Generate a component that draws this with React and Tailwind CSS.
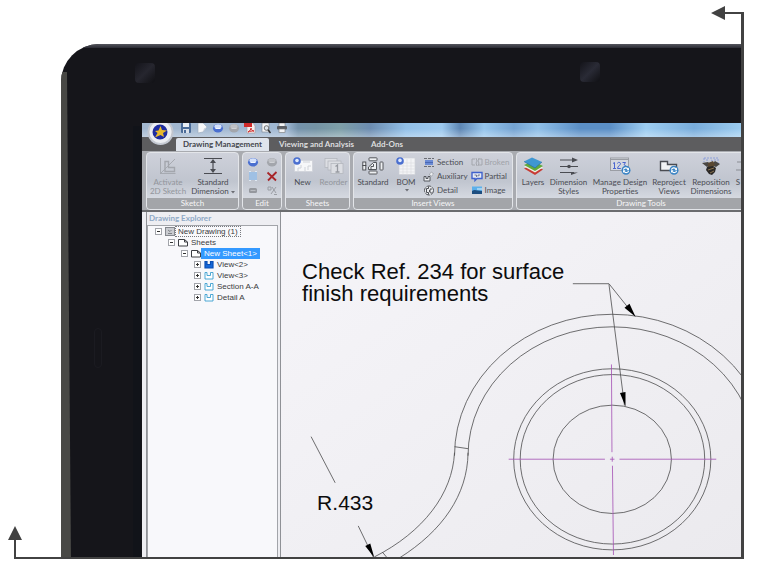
import { useState } from 'react'
import clsx from 'clsx'

/* ---------- quick access icons ---------- */

const SaveIcon = () => (
  <svg width="12" height="11" viewBox="0 0 12 11"><rect x="1" y="0" width="10" height="10" rx="1" fill="#4a6b98"/><rect x="3" y="0" width="6" height="4" fill="#e9eef5"/><rect x="3" y="6" width="6" height="4" fill="#d8dfe9"/><rect x="4" y="7" width="2" height="3" fill="#4a6b98"/></svg>
)
const PageIcon = () => (
  <svg width="12" height="11" viewBox="0 0 12 11"><path d="M2 0h5l4 4-4 5-5 1z" fill="#f7f8fa" stroke="#9ba8ba" strokeWidth=".6"/><path d="M11 4L8 5.500 7 9z" fill="#c6ced9"/></svg>
)
const Orb = ({ gray }) => (
  <svg width="12" height="11" viewBox="0 0 12 11">
    <ellipse cx="6" cy="5.300" rx="5" ry="4.300" fill={gray ? '#a3a6ac' : '#4a6fd0'}/>
    <ellipse cx="6" cy="3.600" rx="3.600" ry="2.400" fill={gray ? '#bfc1c6' : '#d3e0fa'}/>
    <path d={gray ? 'M3.500 5.500h5' : 'M8.500 5.500h-5'} fill="none" stroke={gray ? '#cfd1d5' : '#f4f7fe'} strokeWidth="1.200"/>
  </svg>
)
const PdfIcon = () => (
  <svg width="12" height="11" viewBox="0 0 12 11"><path d="M3 0h6l2 3v7H3z" fill="#f5eded" stroke="#a99" strokeWidth=".6"/><rect x="0" y="0" width="8" height="4" fill="#cf2a2a"/><path d="M4 9c2-1 3-3 3-4 0 2 2 3 3 3-2 0-4 0-6 1z" fill="none" stroke="#cf2a2a"/></svg>
)
const PreviewIcon = () => (
  <svg width="12" height="11" viewBox="0 0 12 11"><rect x="2" y="0" width="7" height="9" fill="#f4f5f7" stroke="#7c828c" strokeWidth=".6"/><circle cx="6.500" cy="5" r="2.300" fill="#dfe6ee" stroke="#555" strokeWidth=".8"/><path d="M8 6.800L10.500 10" stroke="#333" strokeWidth="1.500"/></svg>
)
const PrintIcon = () => (
  <svg width="12" height="11" viewBox="0 0 12 11"><rect x="3" y="0" width="6" height="4" fill="#f2f3f5" stroke="#777" strokeWidth=".6"/><rect x="1" y="3" width="10" height="3.500" rx="1" fill="#5a5d63"/><rect x="3" y="6" width="6" height="3.500" fill="#f2f3f5" stroke="#777" strokeWidth=".6"/></svg>
)

/* ---------- ribbon icons ---------- */

const SketchIcon = () => (
  <svg width="20" height="18" viewBox="0 0 20 18" fill="none" stroke="#a3a6ad"><path d="M2.500 1v15.500h15M2 17L17 2" strokeWidth=".9"/><path d="M7 4.500h3.500v6h6v4H7z" strokeWidth="1.400"/></svg>
)
const DimensionIcon = () => (
  <svg width="20" height="18" viewBox="0 0 20 18" stroke="#4a4c52" fill="#4a4c52"><path d="M1 1.500h18M1 16.500h18M10 3v12" strokeWidth="1.200"/><path d="M10 2l3 4H7zM10 16l3-4H7z" stroke="none"/></svg>
)
const NewIcon = () => (
  <svg width="20" height="18" viewBox="0 0 20 18"><rect x="1.500" y="3.500" width="18" height="11" fill="#f6f7f9" stroke="#cdd0d7" strokeWidth=".7"/><path d="M5 14v-3h3v-3M12 14v-4M15 13v-4h3M10 5h7" stroke="#cfd2d8" fill="none"/><circle cx="4" cy="4" r="3.800" fill="#4a6fd0"/><circle cx="4" cy="3.500" r="1.800" fill="#dfe9fc"/></svg>
)
const ReorderIcon = () => (
  <svg width="20" height="18" viewBox="0 0 20 18" fill="#dcdee3" stroke="#b4b7be" strokeWidth=".8"><rect x="1" y="1.500" width="12" height="9"/><rect x="4" y="4" width="13" height="9"/><rect x="7" y="6.500" width="12" height="10"/><path d="M11.500 9.500l2-1.500v7M11.500 15h4" fill="none" stroke="#979aa1" strokeWidth="1.300"/></svg>
)
const StandardIcon = () => (
  <svg width="22" height="18" viewBox="0 0 22 18" fill="#eef0f3" stroke="#45474d" strokeWidth=".9"><rect x="7" y=".8" width="8" height="3" rx=".6"/><rect x="7" y="14" width="8" height="3" rx=".6"/><rect x=".8" y="5" width="3" height="3.500"/><rect x=".8" y="8.500" width="3" height="4.500"/><rect x="18" y="5" width="3" height="8" rx=".6"/><path d="M6.500 12.500v-2.500l5-4.500h3v7zM9 12.500V9.500h2.500V7"/></svg>
)
const BomIcon = () => (
  <svg width="20" height="18" viewBox="0 0 20 18"><rect x="3" y="1" width="16" height="16.500" fill="#f3f4f6" stroke="#cdd0d6" strokeWidth=".7"/><path d="M3 6h16M3 9h16M3 12h16M3 15h16M7 2v15.500M11 2v15.500M15 2v15.500" stroke="#dcdee3" strokeWidth=".7"/><circle cx="4" cy="4" r="3.800" fill="#4a6fd0"/><circle cx="4" cy="3.400" r="1.800" fill="#dfe9fc"/></svg>
)
const LayersIcon = () => (
  <svg width="20" height="18" viewBox="0 0 20 18"><path d="M1 11.500l9-4 10 5-8 5.500z" fill="#c83c34"/><path d="M1 9.500l9-4 10 5-8 5z" fill="#f0efe8"/><path d="M1 8l9-4 10 5-8 5z" fill="#62ab3c"/><path d="M1 4.500L9 .5l10 4.500-7 6z" fill="#3f97d2"/><path d="M1 4.500L12 11l7-6" fill="none" stroke="#2a6f9f" strokeWidth=".7"/></svg>
)
const StylesIcon = () => (
  <svg width="20" height="18" viewBox="0 0 20 18" stroke="#4a4c52" fill="#4a4c52"><path d="M1 3h14M1 9.500h18M1 15.500h14" strokeWidth="1.100"/><path d="M13 .5l6 2.500-6 2.500zM12 15.500h7l-7 2.500z" stroke="none"/><circle cx="10" cy="9.500" r="1.800" stroke="none"/></svg>
)
// small blue refresh ball shared by the two "update" commands
const Refresh = ({ x, y }) => (
  <g transform={`translate(${x} ${y})`}><circle r="4.500" fill="#3b84c4"/><path d="M-2.600-.6c.6-2 3.200-2.400 4.600-.6M2.600.6c-.6 2-3.200 2.400-4.600.6" fill="none" stroke="#fff" strokeWidth="1.200"/><path d="M3-2.800V0H.4zM-3 2.800V0h2.600z" fill="#fff"/></g>
)
const ManageIcon = () => (
  <svg width="22" height="18" viewBox="0 0 22 18"><rect x="1.500" y="1" width="18" height="12.500" fill="#d5d8df" stroke="#9a9da4"/><path d="M1 2.500h19" stroke="#9a9da4"/><path d="M4 6.500l1.500-1v6M4 11.500h3M8.500 6.500c0-1.600 3-1.500 3 .2 0 1.500-3 2.500-3 4.800h3.300M13.500 5.500h3l-1.500 2.300c2.500 0 2 3.700-1.500 3.500" fill="none" stroke="#4a66cf"/><Refresh x="17" y="13.200"/></svg>
)
const ReprojectIcon = () => (
  <svg width="20" height="18" viewBox="0 0 20 18"><path d="M1.500 4.500h7v3h9v6h-16z" fill="#f1f2f4" stroke="#4a4c52" strokeWidth="1.400"/><Refresh x="15" y="13.200"/></svg>
)
const RepositionIcon = () => (
  <svg width="20" height="18" viewBox="0 0 20 18"><path d="M3 1h14v6M3 1v4M5 3h3M10 3l2 1M13 3h3" fill="none" stroke="#7f94dc" strokeWidth=".8" strokeDasharray="2 1"/><path d="M1 6l6-1 3 3-4 2zM19 7l-5-3-4 4 5 2z" fill="#4a4744"/><path d="M7 6l5-2 2 4-3 3-4-1z" fill="#5a4832"/><path d="M6 10l6-1 3 2-1 4-3 3-3-1-3-4z" fill="#2b2826"/><path d="M7 13l6-2M9 16l4-2" stroke="#a3875a" strokeWidth=".8"/></svg>
)
const MoreIcon = () => (
  <svg width="6" height="18" viewBox="0 0 6 18" stroke="#8a8d93" fill="none"><path d="M2 5h4M1 13h5"/></svg>
)

const SelectIcon = () => (
  <svg width="12" height="11" viewBox="0 0 12 11"><rect x="2" y="1" width="8" height="8" fill="#9fc0e4"/><path d="M2 .5h2M8 .5h2M2 9.500h2M8 9.500h2" stroke="#dfe9f4"/></svg>
)
const DeleteIcon = () => (
  <svg width="12" height="11" viewBox="0 0 12 11"><path d="M1.500 1.500L10 9.500M10.500 1L2 9.500" stroke="#a8262a" strokeWidth="1.800"/></svg>
)
const LinkIcon = () => (
  <svg width="12" height="11" viewBox="0 0 12 11"><rect x="2" y="3" width="8" height="5" rx="1.500" fill="#95989e"/><path d="M3.500 5.500h5" stroke="#b9bcc2"/></svg>
)
const TrimIcon = () => (
  <svg width="12" height="11" viewBox="0 0 12 11" fill="none" stroke="#9b9ea4"><path d="M2 2h3v3H2zM6 2l4 6M10 2L5 9M8 9.500h3"/></svg>
)
const SectionIcon = () => (
  <svg width="12" height="11" viewBox="0 0 12 11"><path d="M1 1.500h10M1 9.500h10" stroke="#6a6d74" strokeDasharray="3 1"/><rect x="2" y="3" width="8" height="5" fill="#6b8bd4"/><path d="M2 5.500h8" stroke="#4a68b4"/></svg>
)
const AuxIcon = () => (
  <svg width="12" height="11" viewBox="0 0 12 11" fill="#eceef1" stroke="#55585e"><path d="M1 5.500h2v2h2v-2h2v4.500H1z"/><path d="M8.500 1l2 2-2.200 2.200-2-2z" strokeWidth=".7" stroke="#8d9096"/></svg>
)
const DetailIcon = () => (
  <svg width="12" height="11" viewBox="0 0 12 11" fill="#eceef1" stroke="#4c4f55"><circle cx="6" cy="5.500" r="4.500" strokeDasharray="5 1"/><path d="M5.500 1.500v2H3.500v4h2v2M8 3v2h-1.500v2H8v1.500" fill="none"/></svg>
)
const BrokenIcon = () => (
  <svg width="12" height="11" viewBox="0 0 12 11" fill="none" stroke="#a3a6ac"><path d="M4 2H1v6h3M8 2h3v6H8M5 1l1 3-1 2 1 3M8 1L7 4l1 2-1 3"/></svg>
)
const PartialIcon = () => (
  <svg width="12" height="11" viewBox="0 0 12 11"><path d="M1 1.500h10v6H6l-2 2v-2H1z" fill="#e6ebf5" stroke="#3f62cc" strokeWidth="1.400"/><path d="M3.500 4h2v2M7 5.500V4h2" stroke="#55617a" fill="none" strokeWidth=".8"/></svg>
)
const ImageIcon = () => (
  <svg width="12" height="11" viewBox="0 0 12 11"><rect x="1" y="1.500" width="10" height="7.500" fill="#5cb0ea"/><path d="M1 6c3-2 5 0 10 0v3H1z" fill="#1d4e80"/><path d="M6 4h5" stroke="#e3f3fc"/></svg>
)

/* ---------- explorer icons ---------- */

const DrawingDocIcon = () => (
  <svg width="10" height="9" viewBox="0 0 10 9"><rect x=".5" y=".5" width="9" height="8" fill="#c9cbd0" stroke="#85888e"/><path d="M3 3l2 1.500 1.500-1.500M3 6.500h4" stroke="#6d7076" strokeWidth=".8" fill="none"/></svg>
)
const SheetIcon = () => (
  <svg width="10" height="9" viewBox="0 0 10 9"><path d="M.5 1.500h6l3 2.500v4h-9z" fill="#fff" stroke="#3c3e43"/><path d="M6.500 1.500V4h3" fill="none" stroke="#3c3e43"/></svg>
)
const ViewIcon = ({ filled }) => (
  <svg width="10" height="9" viewBox="0 0 10 9"><path d="M1 1.500h2v3h3.500v-3H9v6.500H1z" fill={filled ? '#1668d8' : '#fff'} stroke={filled ? '#0b4fb4' : '#3b9fd0'} strokeWidth={filled ? 1.2 : 0.9}/></svg>
)

const quickAccess = [
  ['Save', <SaveIcon/>], ['New', <PageIcon/>], ['Undo', <Orb/>], ['Redo', <Orb gray/>],
  ['Publish to PDF', <PdfIcon/>], ['Print Preview', <PreviewIcon/>], ['Print', <PrintIcon/>],
]

const editTools = [
  ['Undo', <Orb/>], ['Redo', <Orb gray/>], ['Select', <SelectIcon/>],
  ['Delete', <DeleteIcon/>], ['Link', <LinkIcon/>], ['Trim', <TrimIcon/>],
]

const tabs = ['Drawing Management', 'Viewing and Analysis', 'Add-Ons']

const tree = [
  { id: 'root', label: 'New Drawing (1)', level: 0, open: true, icon: <DrawingDocIcon/> },
  { id: 'sheets', label: 'Sheets', level: 1, open: true, icon: <SheetIcon/> },
  { id: 'sheet1', label: 'New Sheet<1>', level: 2, open: true, icon: <SheetIcon/> },
  { id: 'view2', label: 'View<2>', level: 3, icon: <ViewIcon filled/> },
  { id: 'view3', label: 'View<3>', level: 3, icon: <ViewIcon/> },
  { id: 'secA', label: 'Section A-A', level: 3, icon: <ViewIcon/> },
  { id: 'detA', label: 'Detail A', level: 3, icon: <ViewIcon/> },
]
const indent = ['pl-[7px]', 'pl-[20px]', 'pl-[33px]', 'pl-[46px]']

function Group({ title, className, children }) {
  return (
    <section className={clsx('flex shrink-0 flex-col overflow-hidden rounded-sm border border-[#e3e5e9] bg-linear-to-b from-[#ced1da] via-[#c0c5cf] to-[#e3e6ec]', className)}>
      <div className="flex flex-1 items-start pt-1">{children}</div>
      <h2 className="h-[11px] bg-[#a3a5a9] text-center leading-[10px] text-[#f6f6f7]">{title}</h2>
    </section>
  )
}

function Tool({ icon, lines, disabled, menu, className }) {
  return (
    <button disabled={disabled} className={clsx('flex shrink-0 flex-col items-center whitespace-nowrap leading-[9px]', disabled ? 'text-[#92959b]' : 'text-[#4b4d54]', className)}>
      {icon}
      <span className="mt-[3px]">{lines[0]}</span>
      {lines[1] && <span>{lines[1]}{menu && <Caret/>}</span>}
      {!lines[1] && menu && <Caret/>}
    </button>
  )
}

const Caret = () => <svg className="ml-[2px] inline-block" width="4" height="6" viewBox="0 0 4 6"><path d="M0 2h4L2 4.500z" fill="#6b6d73"/></svg>

function SmallTool({ icon, label, disabled }) {
  return (
    <button disabled={disabled} className={clsx('flex items-center gap-[2px] leading-[11px]', disabled ? 'text-[#a0a3a9]' : 'text-[#4b4d54]')}>
      {icon}<span>{label}</span>
    </button>
  )
}

function Ribbon() {
  return (
    <div className="flex h-[61px] gap-[3px] overflow-hidden border-b-2 border-[#6b6c6f] bg-[#a9abb0] pt-px pl-1">
      <Group title="Sketch" className="w-[93px]">
        <Tool icon={<SketchIcon/>} lines={['Activate', '2D Sketch']} disabled className="w-[42px]"/>
        <Tool icon={<DimensionIcon/>} lines={['Standard', 'Dimension']} menu className="w-[48px]"/>
      </Group>
      <Group title="Edit" className="w-[40px]">
        <div className="grid grid-cols-2 justify-items-center gap-y-[3px]">
          {editTools.map(([name, icon]) => <button key={name} aria-label={name} className="w-[19px] pl-1">{icon}</button>)}
        </div>
      </Group>
      <Group title="Sheets" className="w-[65px]">
        <Tool icon={<NewIcon/>} lines={['New']} className="w-[33px]"/>
        <Tool icon={<ReorderIcon/>} lines={['Reorder']} disabled className="w-[29px]"/>
      </Group>
      <Group title="Insert Views" className="w-[160px]">
        <Tool icon={<StandardIcon/>} lines={['Standard']} className="w-[38px]"/>
        <Tool icon={<BomIcon/>} lines={['BOM']} menu className="w-[28px]"/>
        <div className="flex flex-col gap-[3px] pl-[3px]">
          <SmallTool icon={<SectionIcon/>} label="Section"/>
          <SmallTool icon={<AuxIcon/>} label="Auxiliary"/>
          <SmallTool icon={<DetailIcon/>} label="Detail"/>
        </div>
        <div className="flex flex-col gap-[3px] pl-[3px]">
          <SmallTool icon={<BrokenIcon/>} label="Broken" disabled/>
          <SmallTool icon={<PartialIcon/>} label="Partial"/>
          <SmallTool icon={<ImageIcon/>} label="Image"/>
        </div>
      </Group>
      <Group title="Drawing Tools" className="w-[250px]">
        <div className="flex gap-1 pl-1">
          <Tool icon={<LayersIcon/>} lines={['Layers']} className="w-[24px]"/>
          <Tool icon={<StylesIcon/>} lines={['Dimension', 'Styles']} className="w-[39px]"/>
          <Tool icon={<ManageIcon/>} lines={['Manage Design', 'Properties']} className="w-[56px]"/>
          <Tool icon={<ReprojectIcon/>} lines={['Reproject', 'Views']} className="w-[34px]"/>
          <Tool icon={<RepositionIcon/>} lines={['Reposition', 'Dimensions']} className="w-[42px]"/>
          <Tool icon={<MoreIcon/>} lines={['S']} className="w-[4px]"/>
        </div>
      </Group>
    </div>
  )
}

function Explorer() {
  const [selected, setSelected] = useState('sheet1')
  return (
    <aside className="flex w-[135px] shrink-0 flex-col border-x border-[#8f9196] bg-[#eeeef2]">
      <h2 className="h-[13px] pl-[2px] text-[8px] leading-[13px] font-bold text-[#8fa9c6]">Drawing Explorer</h2>
      <ul className="mr-[2px] flex-1 border border-[#a2a4a9] bg-[#f8f8fb] font-['Liberation_Sans',sans-serif] text-[8px] text-[#3a3b40]">
        {tree.map(n => (
          <li key={n.id} className={clsx('flex h-[11px] items-center gap-[3px]', indent[n.level])}>
            <button aria-label={n.open ? 'Collapse' : 'Expand'} className="shrink-0">
              <svg width="7" height="7" viewBox="0 0 7 7"><rect x=".5" y=".5" width="6" height="6" fill="#fff" stroke="#a2a4aa"/><path d={n.open ? 'M2 3.500h3' : 'M2 3.500h3M3.500 2v3'} stroke="#333"/></svg>
            </button>
            <button onClick={() => setSelected(n.id)} className="flex items-center">
              {n.icon}
              <span className={clsx('border px-[2px] leading-[9px] whitespace-nowrap', selected === n.id ? 'border-[#3399ff] bg-[#3399ff] text-white' : n.level === 0 ? 'border-dotted border-[#77797e]' : 'border-transparent')}>{n.label}</span>
            </button>
          </li>
        ))}
      </ul>
    </aside>
  )
}

function Canvas() {
  return (
    <div className="min-w-0 flex-1 overflow-hidden bg-linear-to-br from-[#f6f5f9] to-[#ebeaee]">
      <svg className="h-full w-full" viewBox="282 212 460 345" preserveAspectRatio="xMinYMin slice" fill="none" stroke="#4c4c4e" strokeWidth=".8">
        {/* bracket profile */}
        <path d="M455 455A157 141 0 0 1 769 455M468.500 455A143.500 128.500 0 0 1 755.500 455"/>
        <path d="M455 452C453 493 424 531 375 556M468.500 452C468 494 443 530 400 557M455 446l13.500 2M383 551l5 6"/>
        {/* bore */}
        <ellipse cx="612.300" cy="458.600" rx="98.300" ry="90.300"/>
        <ellipse cx="612.500" cy="458.600" rx="92" ry="84.500"/>
        <ellipse cx="612.300" cy="458.600" rx="59" ry="54"/>
        <path d="M509 458.500h96M610 458.500h4.500M619.500 458.500h96.500M611.500 364l.5 87.500M612.300 456v5M612.500 465l1 89" stroke="#a44fb4"/>
        {/* leaders */}
        <path d="M573 283.500h36L635 316M609 284l15.500 121M312 436l24 46M359 525l15 31"/>
        <path d="M635.500 316.500l-11-9 5-4zM625.500 406l-5.500-13.500 5.500-1zM375 556.500l-9-11.500 5-2.500z" fill="#000" stroke="none"/>
        <g className="font-['Liberation_Sans',sans-serif] text-[21px]" fill="#0c0c0d" stroke="none">
          <text className="text-[22px]" x="303" y="279">Check Ref. 234 for surface</text>
          <text className="text-[22px]" x="303" y="301">finish requirements</text>
          <text x="318" y="509">R.433</text>
        </g>
      </svg>
    </div>
  )
}

function AppWindow() {
  const [tab, setTab] = useState(tabs[0])
  return (
    <div className="relative flex flex-1 flex-col overflow-hidden bg-[#eeeef2] font-[Lato,sans-serif] text-[8px]">
      <div className="flex h-[14px] gap-1 bg-[linear-gradient(0deg,#ffffff55,#ffffff00_60%),linear-gradient(90deg,#a3b8d0_0%,#9fb7d2_24%,#7492ab_26%,#7493a4_29%,#7e9fa8_33%,#6c8cb0_38%,#92c0e8_44%,#9dc9ee_50%,#5d86b4_53%,#95c5ec_57%,#74a3d2_62%,#8fbfe8_66%,#5b8fc6_73%,#5b8fc6_78%,#9dcdf1_84%,#78acdb_92%,#9dcdf1_100%)] pl-[38px]">
        {quickAccess.map(([name, icon]) => <button key={name} aria-label={name} className="h-[11px] w-3">{icon}</button>)}
      </div>
      <nav className="flex h-[14px] gap-[3px] bg-[#5d5d5f] pt-px pl-[34px]">
        {tabs.map(t => (
          <button key={t} onClick={() => setTab(t)} className={clsx('rounded-t-xs px-[7px] leading-[13px] font-bold', tab === t ? 'bg-[#dfe4ec] text-[#44464d]' : 'text-[#dcdcde]')}>{t}</button>
        ))}
      </nav>
      <button aria-label="Application menu" className="absolute -top-1 left-[5px]">
        <svg width="27" height="27" viewBox="0 0 27 27">
          <circle cx="13.500" cy="13" r="13" fill="#c3c8d2"/>
          <circle cx="13.500" cy="13" r="11.500" fill="#eceef2" stroke="#b4b9c3" strokeWidth=".6"/>
          <circle cx="13" cy="13" r="7.500" fill="#1f2da0"/>
          <path d="M13.500 7l1.500 4 5 .5-4 2.500 1 4-3.500-2L8 18.500l2.500-4.500-2.500-2 3.500-.5z" fill="#e8b92c"/>
        </svg>
      </button>
      <Ribbon/>
      <main className="flex min-h-0 flex-1 pl-1">
        <Explorer/>
        <Canvas/>
      </main>
    </div>
  )
}

export default function App() {
  return (
    <div className="relative flex h-screen flex-col bg-white pt-11 pr-[18px] pb-3 pl-[61px]">
      {/* laptop lid */}
      <div className="relative flex min-h-0 flex-1 flex-col overflow-hidden rounded-tl-[38px] bg-[#15151a] pt-[79px] pl-[81px]">
        <span className="absolute inset-x-0 top-0 h-1 bg-linear-to-b from-[#55565e] to-[#2a2b33]"/>
        <span className="absolute top-7 bottom-0 left-0 w-[10px] bg-[#484845] [clip-path:polygon(0_0,60%_0,100%_100%,0_100%)]"/>
        <span className="absolute top-[82px] bottom-0 left-[72px] w-2 bg-[#111319]"/>
        <span className="absolute top-[19px] left-[74px] size-5 rounded-sm bg-linear-to-br from-[#14141a] via-[#26262f] to-[#101014]"/>
        <span className="absolute top-[18px] right-[142px] size-5 rounded-sm bg-linear-to-br from-[#14141a] via-[#2a2b36] to-[#101014]"/>
        <span className="absolute top-[284px] left-[33px] h-10 w-2 rounded-full border border-[#1b1b21]"/>
        <AppWindow/>
      </div>

      {/* section cut line */}
      <div className="pointer-events-none absolute top-3 right-4 bottom-[11px] left-[14px] border-r-[3px] border-b-2 border-[#424242]">
        <svg className="absolute -bottom-[2px] -left-[6px]" width="14" height="33" viewBox="0 0 14 33" fill="#424242"><path d="M7 0l7 14H0zM6 13h2v20H6z"/></svg>
        <svg className="absolute -top-[6px] -right-[3px]" width="33" height="14" viewBox="0 0 33 14" fill="#424242"><path d="M0 7l14-7v14zM13 6h20v2H13z"/></svg>
      </div>
    </div>
  )
}
